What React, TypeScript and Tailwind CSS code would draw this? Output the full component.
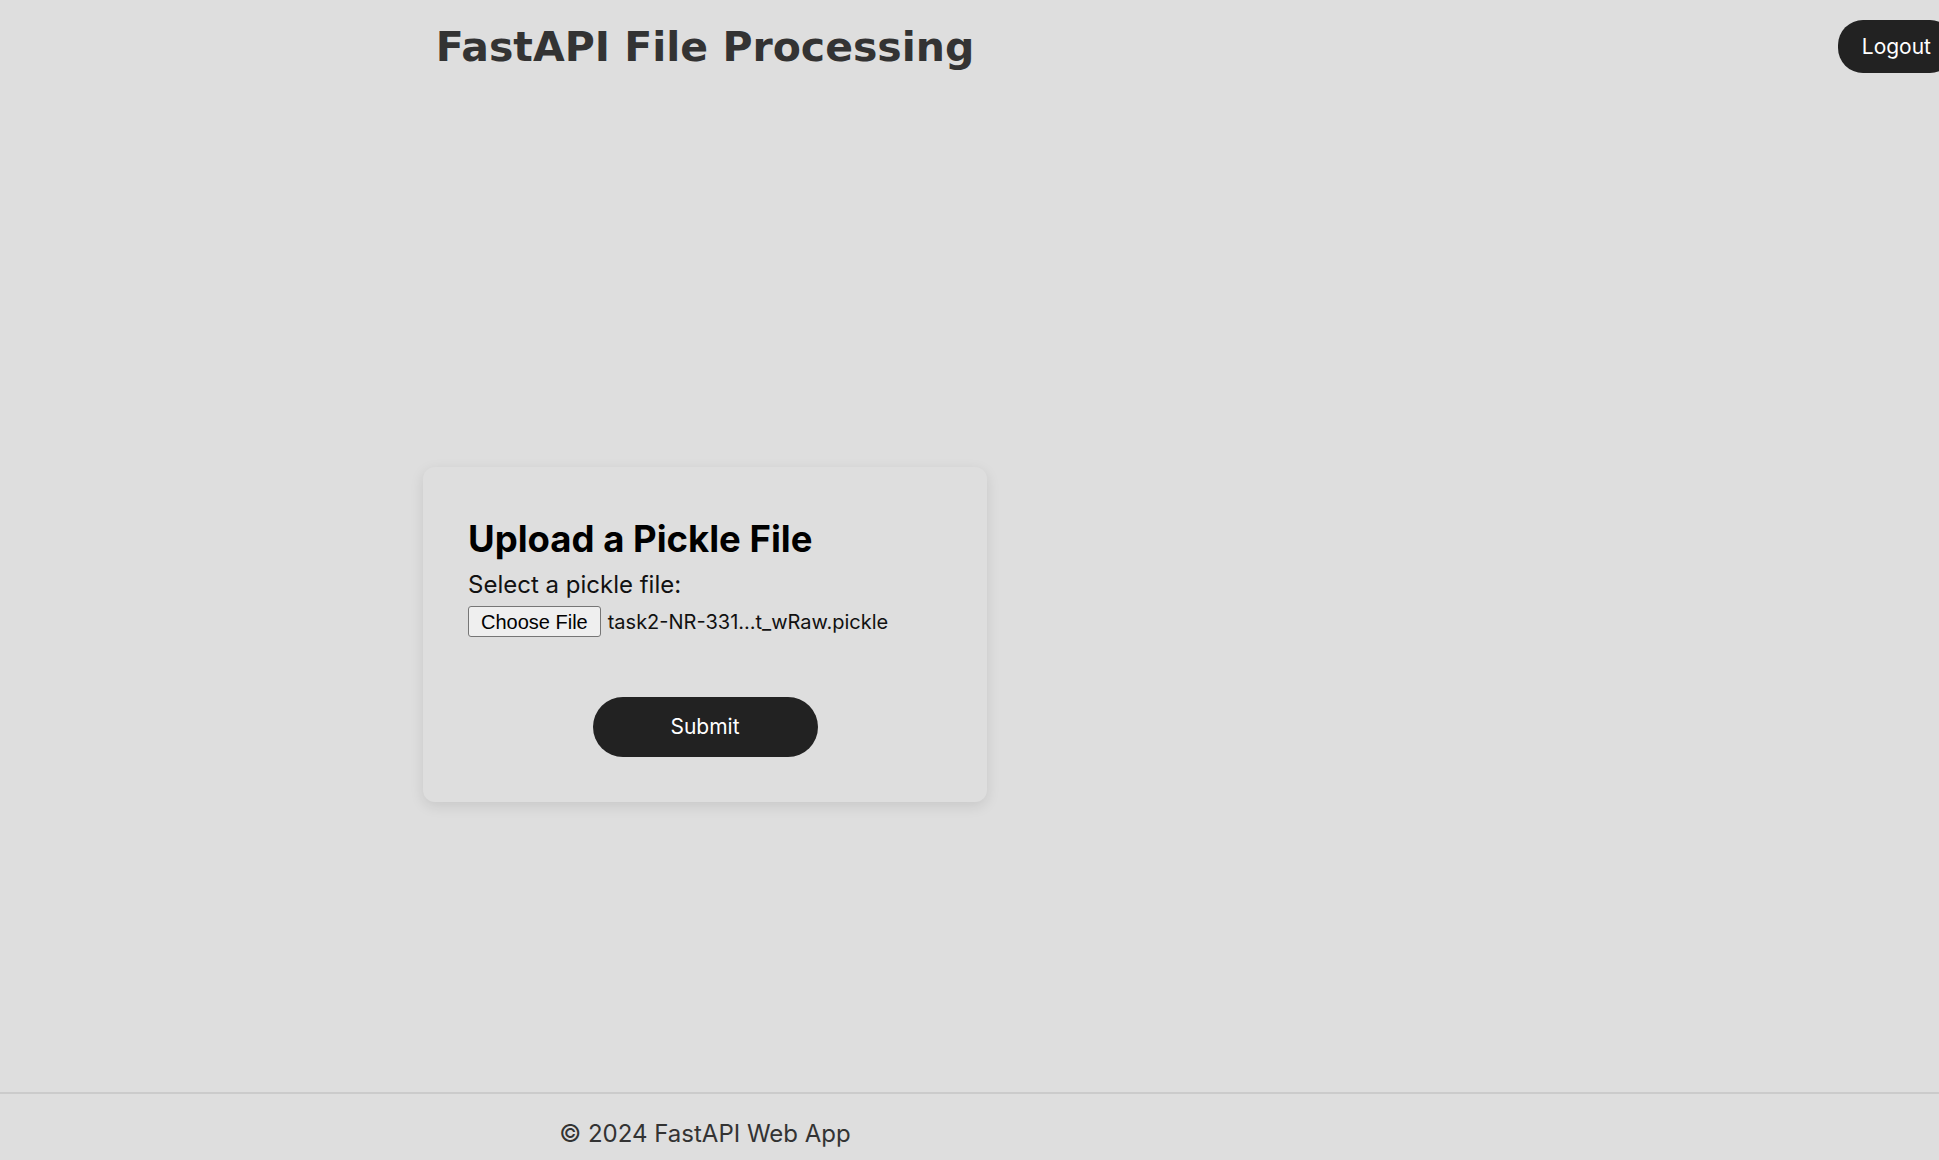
export default function App() {
  return (
    <div className="flex min-h-screen flex-col overflow-hidden bg-[#dedede] font-['Inter',sans-serif] text-[#111]">
      <header className="flex h-[100px] items-start">
        <div className="flex w-[1410px] shrink-0 justify-center pt-[23px]">
          <h1 className="font-['DejaVu_Sans',sans-serif] text-[41px] font-bold leading-[48px] text-[#333]">
            FastAPI File Processing
          </h1>
        </div>
        <button className="ml-auto mr-[-16px] mt-[20px] h-[53px] rounded-[25px] bg-[#222] pl-[24px] pr-[24px] text-[21px] text-white">
          Logout
        </button>
      </header>

      <main className="flex flex-1 flex-col">
        <div className="flex w-[1410px] justify-center pt-[367px]">
          <div className="flex w-[564px] flex-col rounded-[12px] bg-[#dedede] px-[45px] pb-[45px] pt-[45px] shadow-[0_4px_14px_rgba(0,0,0,0.1)]">
            <h2 className="text-[36.5px] font-bold leading-[54px] text-black">
              Upload a Pickle File
            </h2>
            <label className="mt-[3px] text-[24px] leading-[32px]">
              Select a pickle file:
            </label>
            <div className="mt-[5px] flex items-center gap-[7px] text-[20px]">
              <span className="flex h-[31px] items-center rounded-[3px] border border-[#767676] bg-[#efefef] px-[12px] font-['Liberation_Sans',sans-serif] text-[20px] text-black">
                Choose File
              </span>
              <span>task2-NR-331…t_wRaw.pickle</span>
            </div>
            <div className="mt-[60px] flex justify-center">
              <button className="h-[60px] w-[225px] rounded-full bg-[#222] text-[21px] text-white">
                Submit
              </button>
            </div>
          </div>
        </div>
      </main>

      <footer className="h-[68px] border-t-2 border-[#cbcbcb]">
        <div className="flex w-[1410px] justify-center pt-[24px]">
          <p className="text-[24px] leading-[32px] text-[#333]">© 2024 FastAPI Web App</p>
        </div>
      </footer>
    </div>
  );
}
